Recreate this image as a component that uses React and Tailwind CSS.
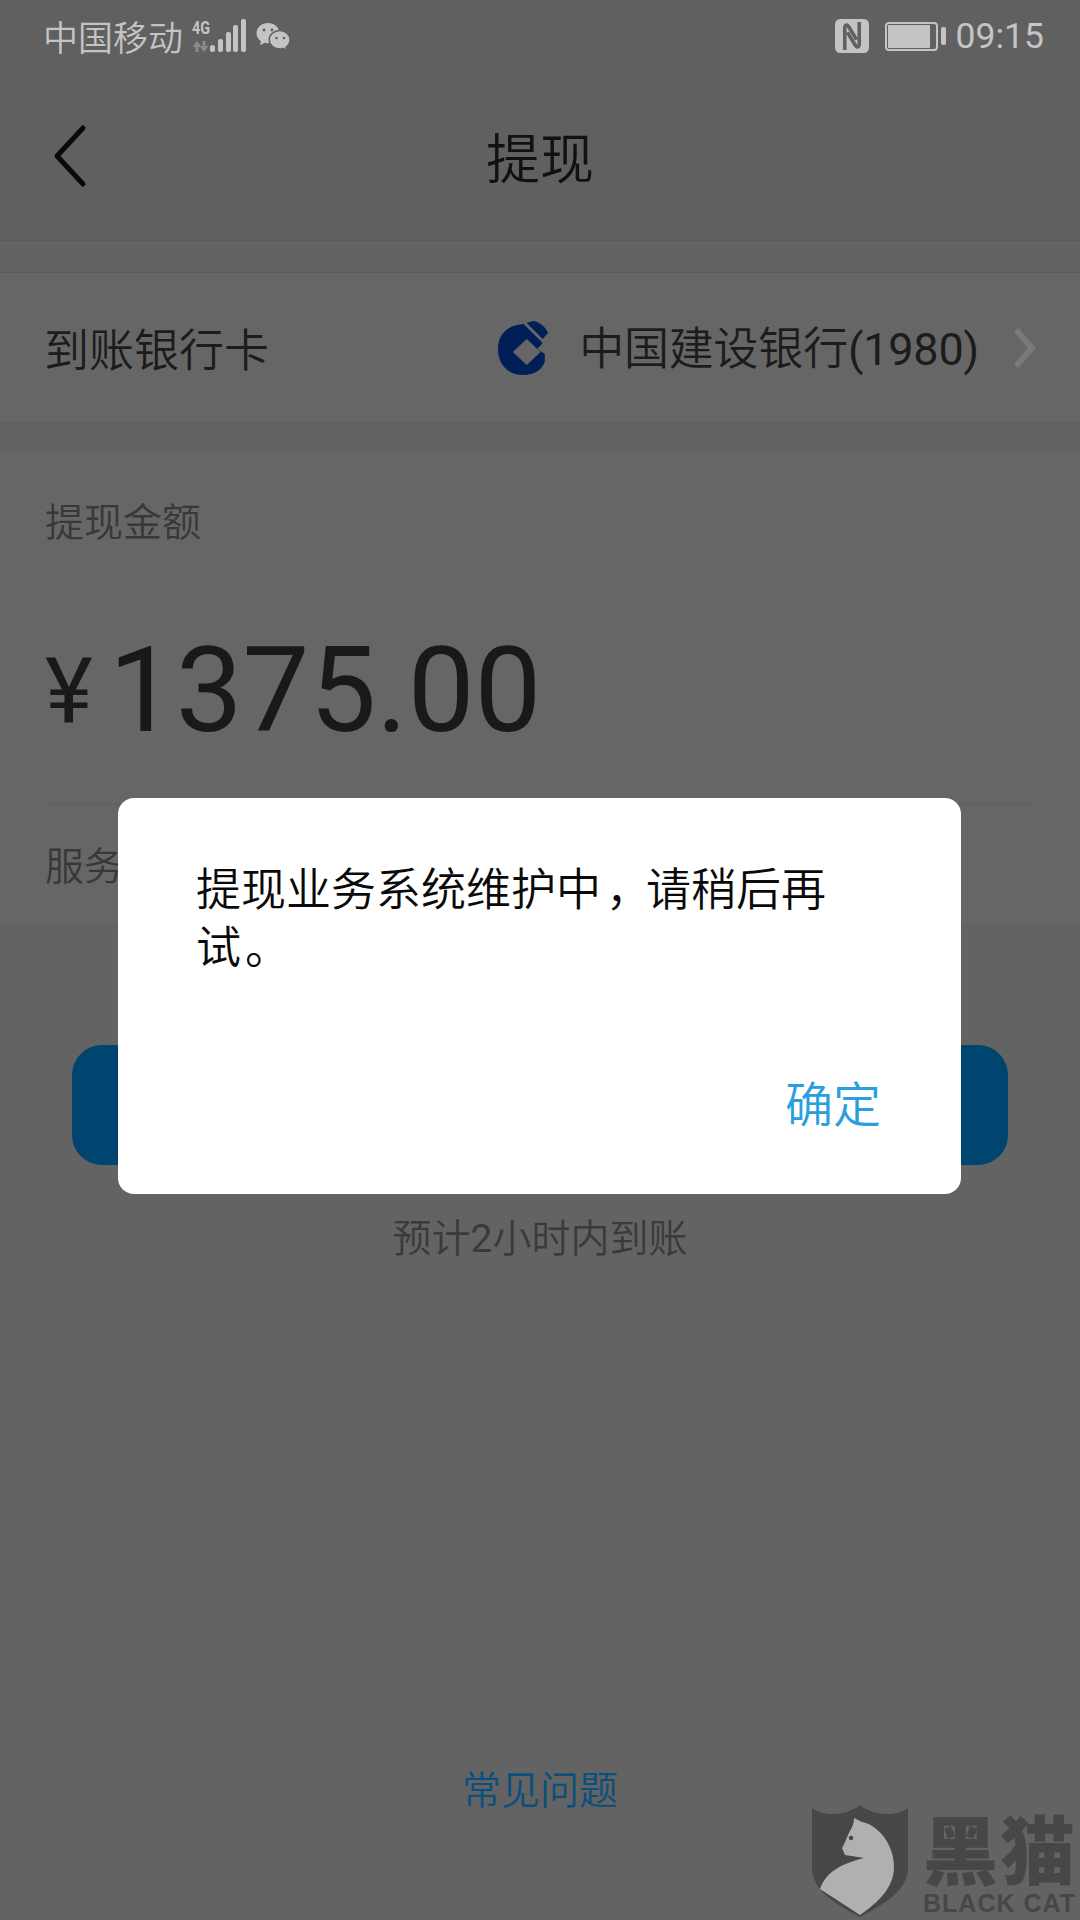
const cjk = "font-['Noto_Sans_CJK_SC','Noto_Sans',sans-serif]";

function StatusIcons() {
  return (
    <svg width="100" height="40" viewBox="0 0 100 40" className="ml-[9px]">
      <text x="0" y="18" fontSize="18" fontWeight="700" fill="#c4c4c4" fontFamily="Roboto, sans-serif" textLength="18" lengthAdjust="spacingAndGlyphs">4G</text>
      <path d="M5 25l-4.500 6h3v5h3v-5h3zM12 36l4.500-6h-3v-5h-3v5h-3z" fill="#8a8a8a" />
      <rect x="18" y="29" width="5" height="7" rx="2.500" fill="#c4c4c4" />
      <rect x="26" y="23" width="5" height="13" rx="2" fill="#c4c4c4" />
      <rect x="34" y="16" width="5" height="20" rx="2" fill="#c4c4c4" />
      <rect x="41" y="9" width="5" height="27" rx="2" fill="#c4c4c4" />
      <rect x="49" y="3" width="5" height="33" rx="2" fill="#c4c4c4" />
      <path d="M76 7c-6.500 0-11.500 4.500-11.500 10.300 0 3.400 1.700 6.200 4.500 8l-1 4 4.800-2.500c1 .3 2.100.4 3.200.4 6.400 0 11.500-4.500 11.500-10S82.400 7 76 7z" fill="#c4c4c4" />
      <path d="M88 14.500c-6 0-10.800 4.200-10.800 9.300S82 33 88 33c1.200 0 2.300-.2 3.400-.5l3.400 2-.8-3.300c2.500-1.700 4-4.300 4-7.400 0-5.100-4.600-9.300-10-9.300z" fill="#c4c4c4" stroke="#606060" strokeWidth="1.500" />
      <g fill="#606060">
        <circle cx="72" cy="14" r="1.400" />
        <circle cx="80" cy="14" r="1.400" />
        <circle cx="84.500" cy="22" r="1.300" />
        <circle cx="92" cy="22" r="1.300" />
      </g>
    </svg>
  );
}

function NfcIcon() {
  return (
    <svg width="34" height="34" viewBox="0 0 33 33">
      <rect width="33" height="33" rx="5" fill="#c4c4c4" />
      <path d="M9.500 30V8c0-2 2-3 3.500-1l8 13" fill="none" stroke="#606060" strokeWidth="3.500" />
      <path d="M23.500 3v22c0 2-2 3-3.500 1l-8-13" fill="none" stroke="#606060" strokeWidth="3.500" />
    </svg>
  );
}

function Battery() {
  return (
    <div className="flex items-center gap-[3px]">
      <div className="w-[53px] h-[29px] rounded-[4px] border-2 border-[#c4c4c4] p-[1px] flex">
        <div className="w-[42px] h-full bg-[#c4c4c4] rounded-[1px]" />
      </div>
      <div className="w-[5px] h-[18px] rounded-[2px] bg-[#c4c4c4]" />
    </div>
  );
}

function CcbLogo() {
  return (
    <svg width="50" height="54" viewBox="13 10 47 54" preserveAspectRatio="none" className="mr-[31px]">
      <path d="M37 13C22 14 13 23 13 38c0 15 9 26 24 26 10 0 17-5 20-13v-8l-7-5 5-6z" fill="#001f57" />
      <path d="M40 12l6-2c6 1 11 5 14 12l-5 6z" fill="#001f57" />
      <path d="M40 28l13 13-13 13-13-13z" fill="#666666" />
    </svg>
  );
}

function BlackCatMark() {
  return (
    <div className="absolute left-[812px] top-[1805px] flex gap-[15px]">
      <svg width="96" height="112" viewBox="0 0 96 112">
        <path d="M0 3c12 9 34 8 48-3 14 11 36 12 48 3v60c0 24-28 38-48 49C28 101 0 87 0 63z" fill="#474747" />
        <path d="M42 13l8 4c16 3 32 22 32 45 0 20-15 35-34 48L8 84c6-18 24-26 44-31l-19-3-3-7c3-5 4-9 6-13 3-6 6-10 6-17z" fill="#b0b0b0" />
        <circle cx="39" cy="33" r="2.200" fill="#474747" />
      </svg>
      <div className="flex flex-col w-[155px] pt-[9px]">
        <div className={`${cjk} text-[75px] leading-[66px] font-black tracking-[2px] text-[#474747] whitespace-nowrap`}>黑猫</div>
        <div className="mt-[13px] font-['Liberation_Sans',sans-serif] text-[25px] leading-[20px] font-bold tracking-[1px] text-[#474747] whitespace-nowrap">BLACK CAT</div>
      </div>
    </div>
  );
}

export default function App() {
  return (
    <div className={`${cjk} relative w-[1080px] h-[1920px] overflow-hidden bg-[#636363] flex flex-col font-[350]`}>
      {/* status bar */}
      <div className="h-[72px] bg-[#606060] flex items-center justify-between pl-[43px] pr-[36px] text-[#c4c4c4]">
        <div className="flex items-center">
          <span className="text-[35px] leading-[40px]">中国移动</span>
          <StatusIcons />
        </div>
        <div className="flex items-center">
          <NfcIcon />
          <div className="ml-[16px]"><Battery /></div>
          <span className="ml-[10px] font-['Roboto',sans-serif] font-normal text-[35.500px] leading-[40px]">09:15</span>
        </div>
      </div>

      {/* header */}
      <div className="relative h-[169px] bg-[#606060] border-b border-[#5a5a5a] flex items-center justify-center">
        <svg width="40" height="66" viewBox="0 0 40 66" className="absolute left-[50px] top-[51px]">
          <path d="M33 5L7 33l26 28" fill="none" stroke="#0a0a0a" strokeWidth="5" strokeLinecap="round" strokeLinejoin="round" />
        </svg>
        <h1 className="text-[54px] leading-[60px] text-[#111111] font-[350]">提现</h1>
      </div>

      {/* bank card row */}
      <div className="mt-[31px] h-[151px] bg-[#666666] border-y border-[#5c5c5c] flex items-center justify-between pl-[44px] pr-[44px]">
        <span className="text-[45px] leading-[52px] text-[#1c1c1c]">到账银行卡</span>
        <div className="flex items-center">
          <CcbLogo />
          <span className="text-[45px] leading-[52px] text-[#1c1c1c] tracking-[-0.2px]">
            中国建设银行<span className="font-['Roboto',sans-serif] font-normal">(1980)</span>
          </span>
          <svg width="24" height="44" viewBox="0 0 24 44" className="ml-[33px]">
            <path d="M4 4l16 18L4 40" fill="none" stroke="#7a7a7a" strokeWidth="6" />
          </svg>
        </div>
      </div>

      {/* amount */}
      <div className="mt-[31px] h-[471px] bg-[#666666] flex flex-col px-[45px]">
        <div className="pt-[42px] text-[39px] leading-[46px] text-[#383838]">提现金额</div>
        <div className="mt-[79px] h-[140px] flex items-center font-['Roboto',sans-serif] font-normal text-[#191919]">
          <span className="text-[91px] leading-[91px] mr-[16px]">¥</span>
          <span className="text-[119px] leading-[140px]">1375.00</span>
        </div>
        <div className="mt-[43px] border-t border-[#5e5e5e] pt-[35px] text-[39px] leading-[46px] text-[#383838]">服务费</div>
      </div>

      {/* submit */}
      <div className="mt-[120px] mx-[72px] h-[120px] rounded-[30px] bg-[#004470] shrink-0" />
      <div className="mt-[47px] text-center text-[39px] leading-[46px] text-[#3a3a3a]">
        预计<span className="font-['Roboto',sans-serif] font-normal">2</span>小时内到账
      </div>

      <div className="mt-auto mb-[110px] text-center text-[39px] leading-[46px] text-[#0c4f7c]">常见问题</div>

      <BlackCatMark />

      {/* dialog */}
      <div className="absolute left-[118px] top-[798px] w-[843px] h-[396px] rounded-[16px] bg-white flex flex-col pl-[78px] pr-[80px] pt-[60px] pb-[65px]">
        <p className="text-[45px] leading-[58px] text-[#0a0a0a]">
          提现业务系统维护<span className="tracking-[5px]">中</span><span className="tracking-[-5px]">，</span>请稍后再<span className="tracking-[4px]">试</span>。
        </p>
        <div className="mt-auto self-end text-[48px] leading-[56px] text-[#2a9fde]">确定</div>
      </div>
    </div>
  );
}
